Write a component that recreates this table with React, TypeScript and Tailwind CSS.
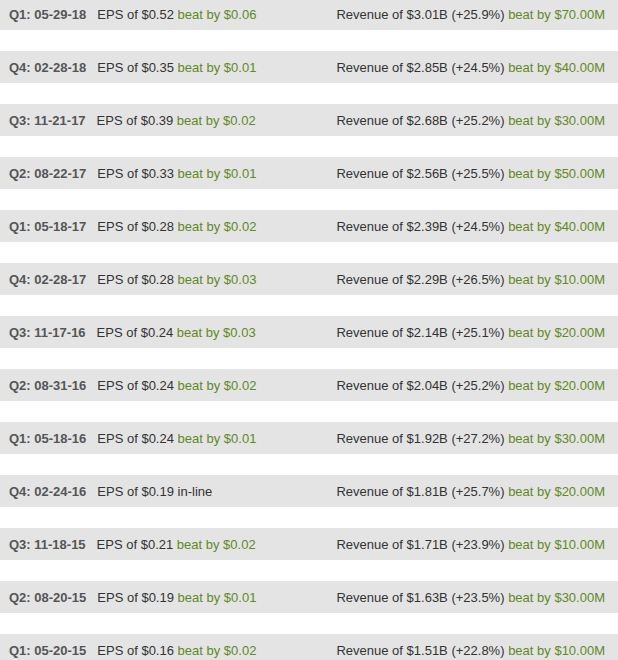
export default function App() {
  const rows = [
    { q: 'Q1: 05-29-18', eps: '$0.52', epsBeat: 'beat by $0.06', rev: '$3.01B (+25.9%)', revBeat: 'beat by $70.00M' },
    { q: 'Q4: 02-28-18', eps: '$0.35', epsBeat: 'beat by $0.01', rev: '$2.85B (+24.5%)', revBeat: 'beat by $40.00M' },
    { q: 'Q3: 11-21-17', eps: '$0.39', epsBeat: 'beat by $0.02', rev: '$2.68B (+25.2%)', revBeat: 'beat by $30.00M' },
    { q: 'Q2: 08-22-17', eps: '$0.33', epsBeat: 'beat by $0.01', rev: '$2.56B (+25.5%)', revBeat: 'beat by $50.00M' },
    { q: 'Q1: 05-18-17', eps: '$0.28', epsBeat: 'beat by $0.02', rev: '$2.39B (+24.5%)', revBeat: 'beat by $40.00M' },
    { q: 'Q4: 02-28-17', eps: '$0.28', epsBeat: 'beat by $0.03', rev: '$2.29B (+26.5%)', revBeat: 'beat by $10.00M' },
    { q: 'Q3: 11-17-16', eps: '$0.24', epsBeat: 'beat by $0.03', rev: '$2.14B (+25.1%)', revBeat: 'beat by $20.00M' },
    { q: 'Q2: 08-31-16', eps: '$0.24', epsBeat: 'beat by $0.02', rev: '$2.04B (+25.2%)', revBeat: 'beat by $20.00M' },
    { q: 'Q1: 05-18-16', eps: '$0.24', epsBeat: 'beat by $0.01', rev: '$1.92B (+27.2%)', revBeat: 'beat by $30.00M' },
    { q: 'Q4: 02-24-16', eps: '$0.19', epsBeat: 'in-line', rev: '$1.81B (+25.7%)', revBeat: 'beat by $20.00M' },
    { q: 'Q3: 11-18-15', eps: '$0.21', epsBeat: 'beat by $0.02', rev: '$1.71B (+23.9%)', revBeat: 'beat by $10.00M' },
    { q: 'Q2: 08-20-15', eps: '$0.19', epsBeat: 'beat by $0.01', rev: '$1.63B (+23.5%)', revBeat: 'beat by $30.00M' },
    { q: 'Q1: 05-20-15', eps: '$0.16', epsBeat: 'beat by $0.02', rev: '$1.51B (+22.8%)', revBeat: 'beat by $10.00M' },
  ];

  return (
    <div className="h-[660px] overflow-hidden bg-white font-['Liberation_Sans',Arial,sans-serif] text-[13px] text-[#333]">
      <div className="-mt-[2px] flex flex-col gap-[21px]">
        {rows.map((r) => (
          <div key={r.q} className="flex h-8 shrink-0 items-center justify-between bg-[#e4e4e4] pl-[9px] pr-[13px] pt-px">
            <div className="flex items-center whitespace-pre">
              <span className="font-bold text-[#555]">{r.q}</span>
              <span className="ml-[11px]">EPS of {r.eps} </span>
              <span className={r.epsBeat === 'in-line' ? 'text-[#333]' : 'text-[#62891f]'}>{r.epsBeat}</span>
            </div>
            <div className="whitespace-pre">
              <span>Revenue of {r.rev} </span>
              <span className="text-[#62891f]">{r.revBeat}</span>
            </div>
          </div>
        ))}
      </div>
    </div>
  );
}
